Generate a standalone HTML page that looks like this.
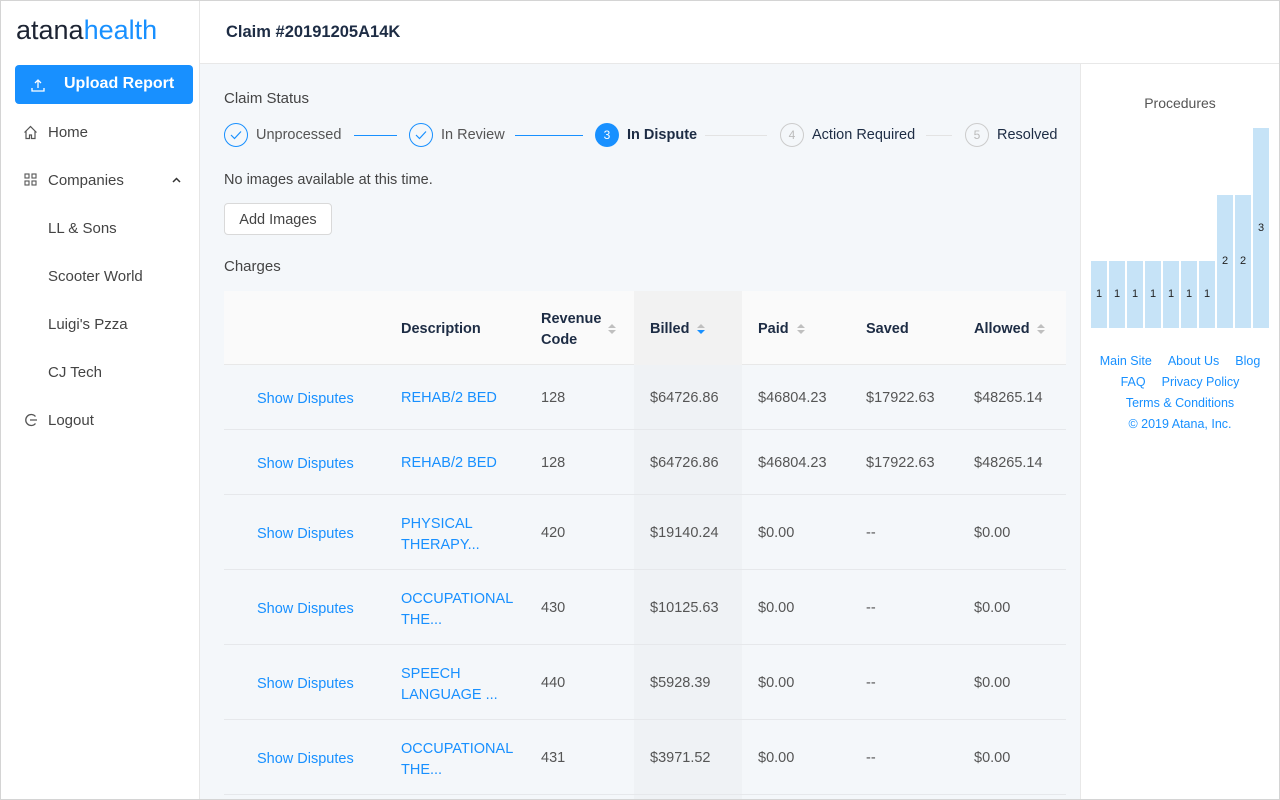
<!DOCTYPE html>
<html><head><meta charset="utf-8"><style>
*{box-sizing:border-box;margin:0;padding:0}
body{width:1280px;height:800px;overflow:hidden;font-family:"Liberation Sans",sans-serif;background:#fff;position:relative;color:#333}
.a{position:absolute;white-space:nowrap}
.frame{position:absolute;left:0;top:0;width:1280px;height:800px;border:1px solid #d4d4d4;pointer-events:none}
.side{left:0;top:0;width:200px;height:800px;background:#fff;border-right:1px solid #e6e6e6}
.nav{font-size:15px;color:#444}
.blue{color:#1890ff}
.main{left:200px;top:64px;width:880px;height:736px;background:#f4f7fa}
.row{position:absolute;left:224px;width:842px;border-bottom:1px solid #e6e8eb}
.cell{position:absolute;font-size:14.5px;color:#555}
.lnk{color:#1890ff}
.h{font-size:14.5px;font-weight:bold;color:#1d2c44}
.bar{position:absolute;background:#c6e3f7;width:16px;bottom:472px;font-size:11px;color:#222;text-align:center}
</style></head><body>
<div class="a side"></div>
<div class="a" style="left:16px;top:15px;font-size:27px;color:#1d2433">atana<span style="color:#1890ff">health</span></div>
<div class="a" style="left:15px;top:65px;width:178px;height:39px;background:#1890ff;border-radius:4px"></div>
<svg class="a" style="left:31px;top:78px" width="14" height="14" viewBox="0 0 14 14" fill="none" stroke="#fff" stroke-width="1.3"><path d="M7 10V2M4 5l3-3 3 3M1 10v3h12v-3"/></svg>
<div class="a" style="left:64px;top:75px;font-size:16px;font-weight:bold;color:#fff">Upload Report</div>
<svg class="a" style="left:23px;top:125px" width="15" height="15" viewBox="0 0 15 15" fill="none" stroke="#555" stroke-width="1.2"><path d="M1.5 7.5L7.5 1.5l6 6M3 6v7.5h3.5V10h2v3.5H12V6"/></svg>
<div class="a nav" style="left:48px;top:124px">Home</div>
<svg class="a" style="left:24px;top:173px" width="13" height="13" viewBox="0 0 13 13" fill="none" stroke="#555" stroke-width="1.1"><rect x="1" y="1" width="4" height="4"/><rect x="8" y="1" width="4" height="4"/><rect x="1" y="8" width="4" height="4"/><rect x="8" y="8" width="4" height="4"/></svg>
<div class="a nav" style="left:48px;top:172px">Companies</div>
<svg class="a" style="left:172px;top:177px" width="9" height="6" viewBox="0 0 9 6" fill="none" stroke="#333" stroke-width="1.5"><path d="M1 5l3.5-3.5L8 5"/></svg>
<div class="a nav" style="left:48px;top:220px">LL &amp; Sons</div>
<div class="a nav" style="left:48px;top:268px">Scooter World</div>
<div class="a nav" style="left:48px;top:316px">Luigi's Pzza</div>
<div class="a nav" style="left:48px;top:364px">CJ Tech</div>
<svg class="a" style="left:24px;top:413px" width="14" height="14" viewBox="0 0 14 14" fill="none" stroke="#555" stroke-width="1.3"><path d="M11.5 3.5A5.5 5.5 0 1 0 11.5 10.5M6 7h7"/></svg>
<div class="a nav" style="left:48px;top:412px">Logout</div>

<div class="a" style="left:200px;top:0;width:1080px;height:64px;border-bottom:1px solid #e8e8e8;background:#fff"></div>
<div class="a" style="left:226px;top:23px;font-size:16.5px;font-weight:bold;color:#1d2c44">Claim #20191205A14K</div>

<div class="a main"></div>
<div class="a" style="left:1080px;top:64px;width:200px;height:736px;background:#fff;border-left:1px solid #e8e8e8"></div>

<div class="a" style="left:224px;top:90px;font-size:15px;color:#444">Claim Status</div>
<div class="a" style="left:224px;top:123px;width:24px;height:24px;border:1px solid #1890ff;border-radius:50%"></div>
<svg class="a" style="left:230px;top:130px" width="12" height="10" viewBox="0 0 12 10" fill="none" stroke="#1890ff" stroke-width="1.2"><path d="M1 5l3.5 3.5L11 1.5"/></svg>
<div class="a" style="left:256px;top:127px;font-size:14.5px;color:#555">Unprocessed</div>
<div class="a" style="left:354px;top:135px;width:43px;height:1px;background:#1890ff"></div>
<div class="a" style="left:409px;top:123px;width:24px;height:24px;border:1px solid #1890ff;border-radius:50%"></div>
<svg class="a" style="left:415px;top:130px" width="12" height="10" viewBox="0 0 12 10" fill="none" stroke="#1890ff" stroke-width="1.2"><path d="M1 5l3.5 3.5L11 1.5"/></svg>
<div class="a" style="left:441px;top:127px;font-size:14.5px;color:#555">In Review</div>
<div class="a" style="left:515px;top:135px;width:68px;height:1px;background:#1890ff"></div>
<div class="a" style="left:595px;top:123px;width:24px;height:24px;background:#1890ff;border-radius:50%;color:#fff;font-size:12px;text-align:center;line-height:24px">3</div>
<div class="a" style="left:627px;top:127px;font-size:14.5px;font-weight:bold;color:#1d2c44">In Dispute</div>
<div class="a" style="left:705px;top:135px;width:62px;height:1px;background:#e3e3e3"></div>
<div class="a" style="left:780px;top:123px;width:24px;height:24px;border:1px solid #ccc;border-radius:50%;color:#bbb;font-size:12px;text-align:center;line-height:22px">4</div>
<div class="a" style="left:812px;top:127px;font-size:14.5px;color:#1d2c44">Action Required</div>
<div class="a" style="left:926px;top:135px;width:26px;height:1px;background:#e3e3e3"></div>
<div class="a" style="left:965px;top:123px;width:24px;height:24px;border:1px solid #ccc;border-radius:50%;color:#bbb;font-size:12px;text-align:center;line-height:22px">5</div>
<div class="a" style="left:997px;top:127px;font-size:14.5px;color:#1d2c44">Resolved</div>

<div class="a" style="left:224px;top:172px;font-size:14.5px;color:#444">No images available at this time.</div>
<div class="a" style="left:224px;top:203px;width:108px;height:32px;background:#fff;border:1px solid #d9d9d9;border-radius:4px;font-size:14.5px;color:#444;text-align:center;line-height:32px">Add Images</div>
<div class="a" style="left:224px;top:258px;font-size:15px;color:#444">Charges</div>

<div class="a" style="left:224px;top:291px;width:842px;height:74px;background:#fafafa;border-bottom:1px solid #e8e8e8"></div>
<div class="a" style="left:634px;top:291px;width:108px;height:74px;background:#f2f2f2"></div>
<div class="a" style="left:634px;top:365px;width:108px;height:435px;background:#eff2f5"></div>
<div class="a h" style="left:401px;top:321px">Description</div>
<div class="a h" style="left:541px;top:309px;line-height:21px">Revenue<br>Code</div>
<div class="a h" style="left:650px;top:321px">Billed</div>
<div class="a h" style="left:758px;top:321px">Paid</div>
<div class="a h" style="left:866px;top:321px">Saved</div>
<div class="a h" style="left:974px;top:321px">Allowed</div>
<svg class="a" style="left:608px;top:323px" width="8" height="12"><path d="M0 5L4 1L8 5Z" fill="#bfbfbf"/><path d="M0 7L4 11L8 7Z" fill="#bfbfbf"/></svg>
<svg class="a" style="left:697px;top:323px" width="8" height="12"><path d="M0 5L4 1L8 5Z" fill="#bfbfbf"/><path d="M0 7L4 11L8 7Z" fill="#1890ff"/></svg>
<svg class="a" style="left:797px;top:323px" width="8" height="12"><path d="M0 5L4 1L8 5Z" fill="#bfbfbf"/><path d="M0 7L4 11L8 7Z" fill="#bfbfbf"/></svg>
<svg class="a" style="left:1037px;top:323px" width="8" height="12"><path d="M0 5L4 1L8 5Z" fill="#bfbfbf"/><path d="M0 7L4 11L8 7Z" fill="#bfbfbf"/></svg>

<div class="row" style="top:365px;height:65px"></div>
<div class="row" style="top:430px;height:65px"></div>
<div class="row" style="top:495px;height:75px"></div>
<div class="row" style="top:570px;height:75px"></div>
<div class="row" style="top:645px;height:75px"></div>
<div class="row" style="top:720px;height:75px"></div>

<div class="a cell lnk" style="left:257px;top:391px">Show Disputes</div>
<div class="a cell lnk" style="left:401px;top:390px">REHAB/2 BED</div>
<div class="a cell" style="left:541px;top:390px">128</div>
<div class="a cell" style="left:650px;top:390px">$64726.86</div>
<div class="a cell" style="left:758px;top:390px">$46804.23</div>
<div class="a cell" style="left:866px;top:390px">$17922.63</div>
<div class="a cell" style="left:974px;top:390px">$48265.14</div>

<div class="a cell lnk" style="left:257px;top:456px">Show Disputes</div>
<div class="a cell lnk" style="left:401px;top:455px">REHAB/2 BED</div>
<div class="a cell" style="left:541px;top:455px">128</div>
<div class="a cell" style="left:650px;top:455px">$64726.86</div>
<div class="a cell" style="left:758px;top:455px">$46804.23</div>
<div class="a cell" style="left:866px;top:455px">$17922.63</div>
<div class="a cell" style="left:974px;top:455px">$48265.14</div>

<div class="a cell lnk" style="left:257px;top:526px">Show Disputes</div>
<div class="a cell lnk" style="left:401px;top:514px;line-height:21px">PHYSICAL<br>THERAPY...</div>
<div class="a cell" style="left:541px;top:525px">420</div>
<div class="a cell" style="left:650px;top:525px">$19140.24</div>
<div class="a cell" style="left:758px;top:525px">$0.00</div>
<div class="a cell" style="left:866px;top:525px">--</div>
<div class="a cell" style="left:974px;top:525px">$0.00</div>

<div class="a cell lnk" style="left:257px;top:601px">Show Disputes</div>
<div class="a cell lnk" style="left:401px;top:589px;line-height:21px">OCCUPATIONAL<br>THE...</div>
<div class="a cell" style="left:541px;top:600px">430</div>
<div class="a cell" style="left:650px;top:600px">$10125.63</div>
<div class="a cell" style="left:758px;top:600px">$0.00</div>
<div class="a cell" style="left:866px;top:600px">--</div>
<div class="a cell" style="left:974px;top:600px">$0.00</div>

<div class="a cell lnk" style="left:257px;top:676px">Show Disputes</div>
<div class="a cell lnk" style="left:401px;top:664px;line-height:21px">SPEECH<br>LANGUAGE ...</div>
<div class="a cell" style="left:541px;top:675px">440</div>
<div class="a cell" style="left:650px;top:675px">$5928.39</div>
<div class="a cell" style="left:758px;top:675px">$0.00</div>
<div class="a cell" style="left:866px;top:675px">--</div>
<div class="a cell" style="left:974px;top:675px">$0.00</div>

<div class="a cell lnk" style="left:257px;top:751px">Show Disputes</div>
<div class="a cell lnk" style="left:401px;top:739px;line-height:21px">OCCUPATIONAL<br>THE...</div>
<div class="a cell" style="left:541px;top:750px">431</div>
<div class="a cell" style="left:650px;top:750px">$3971.52</div>
<div class="a cell" style="left:758px;top:750px">$0.00</div>
<div class="a cell" style="left:866px;top:750px">--</div>
<div class="a cell" style="left:974px;top:750px">$0.00</div>

<div class="a" style="left:1080px;top:95px;width:200px;text-align:center;font-size:14px;color:#555">Procedures</div>
<div class="bar" style="left:1091px;height:67px;line-height:67px">1</div>
<div class="bar" style="left:1109px;height:67px;line-height:67px">1</div>
<div class="bar" style="left:1127px;height:67px;line-height:67px">1</div>
<div class="bar" style="left:1145px;height:67px;line-height:67px">1</div>
<div class="bar" style="left:1163px;height:67px;line-height:67px">1</div>
<div class="bar" style="left:1181px;height:67px;line-height:67px">1</div>
<div class="bar" style="left:1199px;height:67px;line-height:67px">1</div>
<div class="bar" style="left:1217px;height:133px;line-height:133px">2</div>
<div class="bar" style="left:1235px;height:133px;line-height:133px">2</div>
<div class="bar" style="left:1253px;height:200px;line-height:200px">3</div>
<div class="a blue" style="left:1080px;top:351px;width:200px;font-size:12.5px;text-align:center;line-height:21px;white-space:normal">
<span style="margin-right:16px">Main Site</span><span style="margin-right:16px">About Us</span><span>Blog</span><br>
<span style="margin-right:16px">FAQ</span><span>Privacy Policy</span><br>
Terms &amp; Conditions<br>© 2019 Atana, Inc.</div>
<div class="frame"></div>
</body></html>
